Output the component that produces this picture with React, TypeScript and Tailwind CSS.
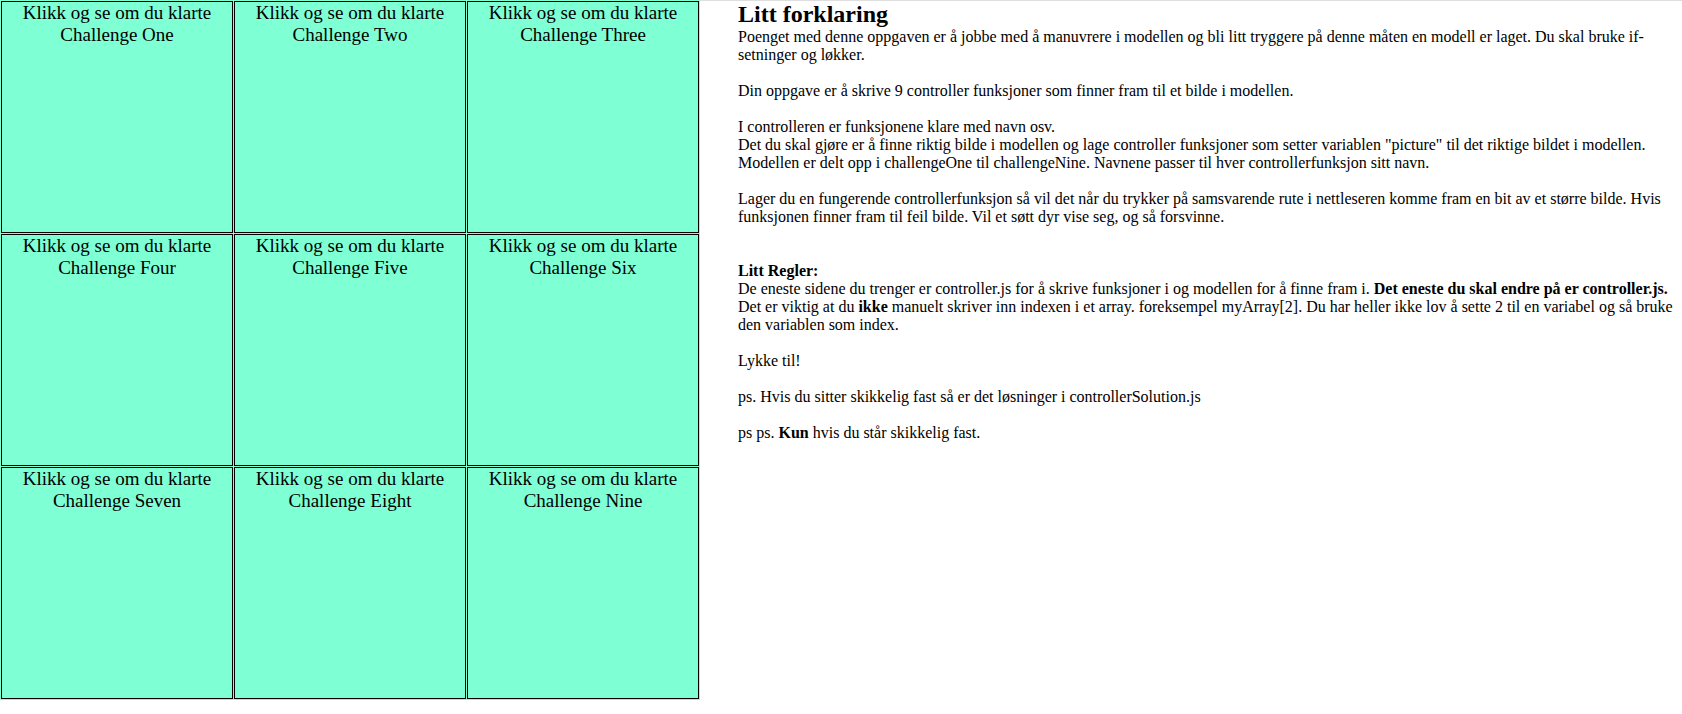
const challenges = ['One', 'Two', 'Three', 'Four', 'Five', 'Six', 'Seven', 'Eight', 'Nine'];

const ChallengeCell = ({ name }: { name: string }): JSX.Element => (
  <div className="h-[232px] w-[232px] border border-black bg-[#7fffd4] text-center font-['Liberation_Serif','Times_New_Roman',serif] text-[19px] leading-[22px] text-black">
    Klikk og se om du klarte
    <br />
    Challenge {name}
  </div>
);

const App = (): JSX.Element => {
  return (
    <div className="flex min-h-[714px] w-full bg-white font-['Liberation_Serif','Times_New_Roman',serif] text-black">
      <div className="grid h-[700px] w-[700px] shrink-0 grid-cols-3 gap-px bg-[#7fffd4] p-px">
        {challenges.map((name) => (
          <ChallengeCell key={name} name={name} />
        ))}
      </div>

      <div className="flex-1 border-t border-[#dedede] pl-[38px]">
        <h2 className="-mt-px text-[24px] font-bold leading-[28px]">Litt forklaring</h2>
        <p className="text-[16px] leading-[18px]">
          Poenget med denne oppgaven er å jobbe med å manuvrere i modellen og bli litt tryggere på denne måten en modell er
          laget. Du skal bruke if-setninger og løkker.
          <br />
          <br />
          Din oppgave er å skrive 9 controller funksjoner som finner fram til et bilde i modellen.
          <br />
          <br />
          I controlleren er funksjonene klare med navn osv.
          <br />
          Det du skal gjøre er å finne riktig bilde i modellen og lage controller funksjoner som setter variablen "picture" til
          det riktige bildet i modellen.
          <br />
          Modellen er delt opp i challengeOne til challengeNine. Navnene passer til hver controllerfunksjon sitt navn.
          <br />
          <br />
          Lager du en fungerende controllerfunksjon så vil det når du trykker på samsvarende rute i nettleseren komme fram en
          bit av et større bilde. Hvis funksjonen finner fram til feil bilde. Vil et søtt dyr vise seg, og så forsvinne.
          <br />
          <br />
          <br />
          <b>Litt Regler:</b>
          <br />
          De eneste sidene du trenger er controller.js for å skrive funksjoner i og modellen for å finne fram i.{' '}
          <b>Det eneste du skal endre på er controller.js.</b>
          <br />
          Det er viktig at du <b>ikke</b> manuelt skriver inn indexen i et array. foreksempel myArray[2]. Du har heller ikke lov
          å sette 2 til en variabel og så bruke den variablen som index.
          <br />
          <br />
          Lykke til!
          <br />
          <br />
          ps. Hvis du sitter skikkelig fast så er det løsninger i controllerSolution.js
          <br />
          <br />
          ps ps. <b>Kun</b> hvis du står skikkelig fast.
        </p>
      </div>
    </div>
  );
};

export default App;
